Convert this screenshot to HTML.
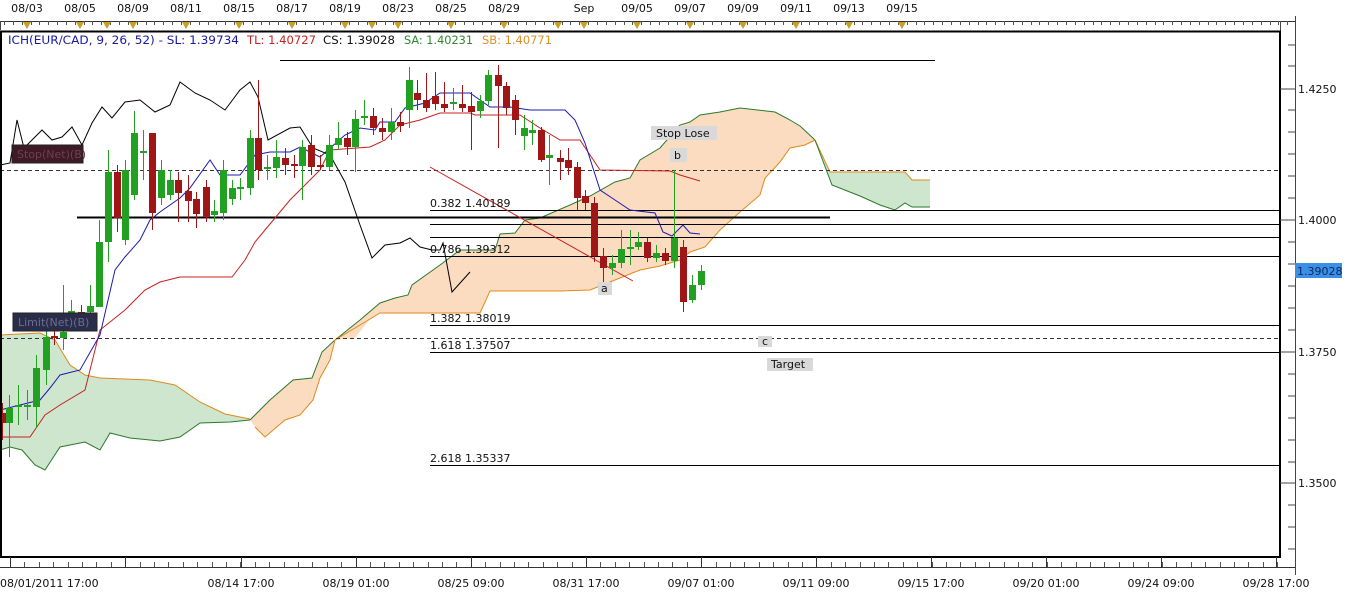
<!DOCTYPE html>
<html><head><meta charset="utf-8"><style>
html,body{margin:0;padding:0;background:#fff;}
svg{display:block;}
text{font-family:"DejaVu Sans","Liberation Sans",sans-serif;}
</style></head><body>
<svg width="1352" height="595" viewBox="0 0 1352 595" xmlns="http://www.w3.org/2000/svg">
<rect width="1352" height="595" fill="#fff"/>
<g font-size="11" fill="#111" text-anchor="middle">
<text x="27" y="12">08/03</text><text x="80" y="12">08/05</text><text x="133" y="12">08/09</text><text x="186" y="12">08/11</text><text x="239" y="12">08/15</text><text x="292" y="12">08/17</text><text x="345" y="12">08/19</text><text x="398" y="12">08/23</text><text x="451" y="12">08/25</text><text x="504" y="12">08/29</text><text x="584" y="12">Sep</text><text x="637" y="12">09/05</text><text x="690" y="12">09/07</text><text x="743" y="12">09/09</text><text x="796" y="12">09/11</text><text x="849" y="12">09/13</text><text x="902" y="12">09/15</text>
</g>
<line x1="0" y1="21.5" x2="1295" y2="21.5" stroke="#333" stroke-width="1"/>
<g id="tt" stroke="#555" stroke-width="1"></g>
<path d="M0.5 21 V30 M1280.5 21V31 M1295.5 16V575" stroke="#444" fill="none"/>
<g fill="#c8a028">
<path d="M23 22h8l-4 7z M76 22h8l-4 7z M103 22h8l-4 7z M129 22h8l-4 7z M182 22h8l-4 7z M235 22h8l-4 7z M288 22h8l-4 7z M341 22h8l-4 7z M368 22h8l-4 7z M394 22h8l-4 7z M447 22h8l-4 7z M500 22h8l-4 7z M554 22h8l-4 7z M580 22h8l-4 7z M633 22h8l-4 7z M686 22h8l-4 7z M739 22h8l-4 7z M792 22h8l-4 7z M845 22h8l-4 7z M898 22h8l-4 7z"/>
</g>
<path d="M0 335 L40 333 L55 340 L70 365 L85 375 L100 378 L150 380 L175 385 L200 402 L225 414 L250 419 L250 420 L230 422 L200 423 L180 437 L160 441 L130 438 L110 433 L100 450 L85 442 L60 447 L45 470 L35 465 L22 450 L10 447 L0 450 Z" fill="#cde6cd"/>
<path d="M0 335 L40 333 L55 340 L70 365 L85 375 L100 378 L150 380 L175 385 L200 402 L225 414 L250 419" stroke="#e08a1a" fill="none"/>
<path d="M0 450 L10 447 L22 450 L35 465 L45 470 L60 447 L85 442 L100 450 L110 433 L130 438 L160 441 L180 437 L200 423 L230 422 L250 420" stroke="#2a7a2a" fill="none"/>
<path d="M250 420 L270 400 L293 380 L312 378 L322 352 L335 340 L360 320 L380 303 L395 298 L408 295 L412 285 L440 265 L460 250 L495 250 L500 234 L515 233 L525 220 L540 218 L570 205 L590 196 L615 182 L630 178 L640 160 L660 148 L680 125 L690 122 L700 115 L720 112 L740 108 L775 112 L790 120 L800 126 L815 140 L805 145 L790 148 L780 162 L765 178 L760 195 L740 212 L720 230 L705 247 L690 252 L680 260 L660 266 L640 270 L620 278 L590 290 L560 291 L490 291 L480 313 L380 313 L370 319 L355 338 L335 340 L330 360 L320 378 L313 400 L300 415 L285 420 L265 437 L255 427 Z" fill="#fcdcc0"/>
<path d="M250 420 L270 400 L293 380 L312 378 L322 352 L335 340 L360 320 L380 303 L395 298 L408 295 L412 285 L440 265 L460 250 L495 250 L500 234 L515 233 L525 220 L540 218 L570 205 L590 196 L615 182 L630 178 L640 160 L660 148 L680 125 L690 122 L700 115 L720 112 L740 108 L775 112 L790 120 L800 126 L815 140" stroke="#2a7a2a" fill="none"/>
<path d="M255 427 L265 437 L285 420 L300 415 L313 400 L320 378 L330 360 L335 340 L370 319 L380 313 L480 313 L490 291 L560 291 L590 290 L620 278 L640 270 L660 266 L680 260 L690 252 L705 247 L720 230 L740 212 L760 195 L765 178 L780 162 L790 148 L805 145 L815 140" stroke="#e08a1a" fill="none"/>
<path d="M815 140 L830 172 L905 172 L912 180 L930 180 L930 207 L912 207 L905 203 L895 210 L880 205 L860 196 L840 188 L832 185 Z" fill="#cde6cd"/>
<path d="M815 140 L830 172 L905 172 L912 180 L930 180" stroke="#e08a1a" fill="none"/>
<path d="M815 140 L832 185 L860 196 L880 205 L895 210 L905 203 L912 207 L930 207" stroke="#2a7a2a" fill="none"/>
<line x1="280" y1="60.5" x2="935" y2="60.5" stroke="#000"/>
<line x1="77" y1="217.5" x2="830" y2="217.5" stroke="#000" stroke-width="2"/>
<g stroke="#000" stroke-width="1">
<line x1="430" y1="210.5" x2="1280" y2="210.5"/><line x1="430" y1="224.5" x2="1280" y2="224.5"/><line x1="430" y1="237.5" x2="1280" y2="237.5"/><line x1="430" y1="256.5" x2="1280" y2="256.5"/><line x1="430" y1="325.5" x2="1280" y2="325.5"/><line x1="430" y1="352.5" x2="1280" y2="352.5"/><line x1="430" y1="465.5" x2="1280" y2="465.5"/>
</g>
<line x1="0" y1="170.5" x2="1280" y2="170.5" stroke="#333" stroke-dasharray="4 3"/>
<line x1="0" y1="338.5" x2="1280" y2="338.5" stroke="#333" stroke-dasharray="4 3"/>
<line x1="430" y1="167" x2="633" y2="281" stroke="#c82020"/>
<path d="M0 437 L30 437 L45 415 L60 405 L85 390 L100 330 L125 310 L145 290 L160 282 L180 277 L232 277 L245 260 L255 242 L265 230 L290 200 L310 180 L320 170 L330 150 L370 147 L385 140 L400 125 L420 120 L440 113 L470 113 L475 115 L520 115 L540 128 L560 140 L580 140 L600 170 L670 171 L680 175 L700 181" stroke="#c82020" fill="none"/>
<path d="M0 410 L20 405 L40 400 L50 388 L60 375 L80 370 L100 335 L115 270 L125 257 L140 240 L150 220 L160 212 L180 198 L190 188 L210 160 L220 175 L240 175 L255 155 L270 152 L290 152 L300 147 L320 157 L345 135 L360 128 L375 130 L380 122 L395 122 L405 108 L425 103 L440 93 L470 93 L490 107 L510 107 L530 110 L565 110 L575 120 L585 143 L600 190 L615 200 L630 210 L655 213 L663 232 L672 236 L683 225 L690 233 L700 234" stroke="#1a1ab0" fill="none"/>
<path d="M0 165 L10 163 L17 120 L24 148 L32 140 L42 130 L52 140 L62 137 L72 127 L82 145 L92 123 L102 107 L112 118 L125 102 L140 100 L155 112 L170 105 L180 82 L195 93 L210 100 L225 110 L240 90 L250 82 L258 97 L268 140 L290 128 L300 127 L313 148 L330 155 L345 182 L360 225 L372 258 L385 245 L400 243 L410 238 L420 247 L432 250 L440 250 L443 243 L452 292 L470 272" stroke="#000" fill="none"/>
<g id="candles"></g>
<rect x="12" y="145" width="71" height="18" fill="#3d1a25" stroke="#222"/>
<text x="17" y="158" font-size="11" fill="#70404f">Stop(Net)(B)</text>
<rect x="13" y="313" width="84" height="18" fill="#2a2d4a" stroke="#222"/>
<text x="18" y="326" font-size="11" fill="#6a6e92">Limit(Net)(B)</text>
<g font-size="11" fill="#111">
<text x="430" y="207">0.382 1.40189</text><text x="430" y="253">0.786 1.39312</text><text x="430" y="322">1.382 1.38019</text><text x="430" y="349">1.618 1.37507</text><text x="430" y="462">2.618 1.35337</text>
</g>
<g font-size="11" fill="#111">
<rect x="651" y="126" width="66" height="14" fill="#d9d9d9"/><text x="656" y="137">Stop Lose</text>
<rect x="670" y="148" width="17" height="14" fill="#d9d9d9"/><text x="674" y="159">b</text>
<rect x="598" y="282" width="14" height="13" fill="#d9d9d9"/><text x="601" y="292">a</text>
<rect x="758" y="336" width="14" height="11" fill="#d9d9d9"/><text x="762" y="345">c</text>
<rect x="767" y="358" width="46" height="13" fill="#d9d9d9"/><text x="771" y="368">Target</text>
</g>
<rect x="1" y="31.5" width="1279" height="525.5" fill="none" stroke="#000" stroke-width="2"/>
<g stroke="#444">
<path d="M1288 45h7M1288 66h7M1288 110h7M1288 132h7M1288 154h7M1288 176h7M1288 198h7M1288 242h7M1288 264h7M1288 286h7M1288 308h7M1288 330h7M1288 374h7M1288 396h7M1288 418h7M1288 440h7M1288 462h7M1288 505h7M1288 527h7M1288 549h7"/>
<path d="M1280 89h15M1280 220h15M1280 352h15M1280 483h15"/>
</g>
<g font-size="11" fill="#111">
<text x="1298" y="93">1.4250</text><text x="1298" y="224">1.4000</text><text x="1298" y="356">1.3750</text><text x="1298" y="487">1.3500</text>
</g>
<rect x="1295" y="263" width="47" height="15" fill="#3c8fe6"/>
<text x="1297" y="275" font-size="11" fill="#0a2a60">1.39028</text>
<line x1="0" y1="567.5" x2="1295" y2="567.5" stroke="#333"/>
<g id="bt" stroke="#555"></g>
<g stroke="#333"><path d="M10.5 557V567M125.5 557V567M241.5 557V567M356.5 557V567M471.5 557V567M586.5 557V567M701.5 557V567M816.5 557V567M931.5 557V567M1046.5 557V567M1161.5 557V567M1276.5 557V567"/></g>
<g font-size="11" fill="#111" text-anchor="middle">
<text x="0" y="587" text-anchor="start">08/01/2011 17:00</text><text x="241" y="587">08/14 17:00</text><text x="356" y="587">08/19 01:00</text><text x="471" y="587">08/25 09:00</text><text x="586" y="587">08/31 17:00</text><text x="701" y="587">09/07 01:00</text><text x="816" y="587">09/11 09:00</text><text x="931" y="587">09/15 17:00</text><text x="1046" y="587">09/20 01:00</text><text x="1161" y="587">09/24 09:00</text><text x="1276" y="587">09/28 17:00</text>
</g>
<g font-size="11.5">
<text x="8" y="44" fill="#1a1aa0" textLength="231" lengthAdjust="spacingAndGlyphs">ICH(EUR/CAD, 9, 26, 52) -  SL: 1.39734</text>
<text x="247" y="44" fill="#c82020" textLength="69" lengthAdjust="spacingAndGlyphs">TL: 1.40727</text>
<text x="323" y="44" fill="#111" textLength="72" lengthAdjust="spacingAndGlyphs">CS: 1.39028</text>
<text x="404" y="44" fill="#2a8a2a" textLength="69" lengthAdjust="spacingAndGlyphs">SA: 1.40231</text>
<text x="482" y="44" fill="#e0902a" textLength="70" lengthAdjust="spacingAndGlyphs">SB: 1.40771</text>
</g>
</svg>
<script>
(function(){
var NS="http://www.w3.org/2000/svg";
function el(p,t,a){var e=document.createElementNS(NS,t);for(var k in a)e.setAttribute(k,a[k]);p.appendChild(e);return e;}
var tt=document.getElementById('tt');var d="";
for(var x=4;x<1290;x+=8.85){d+="M"+(Math.round(x)+0.5)+" 21V25";}
el(tt,'path',{d:d,fill:'none'});
var bt=document.getElementById('bt');d="";
for(var x=10;x<1280;x+=14.4){d+="M"+(Math.round(x)+0.5)+" 562V567";}
el(bt,'path',{d:d,fill:'none'});
var C=[
[2,413,423,403,440,'r'],[9,408,423,395,457,'g'],[18,405,407,385,425,'g'],[27,405,407,390,420,'g'],[36,368,407,355,428,'g'],[46,337,370,320,385,'g'],[54,336,338,325,345,'r'],[63,332,338,285,350,'g'],[71,311,313,300,330,'g'],[81,312,317,305,330,'r'],[90,306,312,285,320,'g'],[99,242,307,220,307,'g'],[108,172,242,150,262,'g'],[117,172,218,165,232,'r'],[125,170,240,160,245,'g'],[134,133,195,111,200,'g'],[143,151,153,130,180,'g'],[152,133,213,140,230,'r'],[161,170,198,160,205,'g'],[170,180,195,170,200,'g'],[178,180,193,172,222,'r'],[188,191,201,175,222,'r'],[196,199,214,192,228,'r'],[206,187,217,180,222,'r'],[214,211,215,200,222,'g'],[223,170,213,160,220,'g'],[232,188,199,180,205,'g'],[240,187,189,178,200,'g'],[250,138,188,130,195,'g'],[258,138,170,80,180,'r'],[267,167,169,155,180,'g'],[276,157,168,140,178,'g'],[285,158,165,148,175,'r'],[294,164,166,155,178,'r'],[302,147,166,140,200,'g'],[311,145,167,135,175,'r'],[320,165,167,155,170,'r'],[329,145,167,135,170,'g'],[338,138,145,122,150,'g'],[347,138,147,132,155,'r'],[355,119,147,110,172,'g'],[364,116,118,100,125,'g'],[373,116,128,108,135,'r'],[382,128,132,118,140,'r'],[391,122,132,108,140,'g'],[400,122,126,112,132,'r'],[409,80,110,67,128,'g'],[417,93,100,80,110,'r'],[426,100,108,73,112,'r'],[435,96,104,72,110,'r'],[444,104,108,82,112,'r'],[453,102,104,88,110,'g'],[462,104,108,85,112,'r'],[471,106,112,92,150,'r'],[480,101,111,95,118,'g'],[488,75,101,70,105,'g'],[498,75,86,65,148,'r'],[506,86,108,82,115,'r'],[515,100,120,95,135,'r'],[524,128,136,115,150,'g'],[532,130,133,120,145,'g'],[541,130,160,127,162,'r'],[549,155,158,135,185,'g'],[560,158,162,150,180,'r'],[568,160,168,148,175,'r'],[577,167,198,162,210,'r'],[585,196,203,190,210,'r'],[594,203,256,197,262,'r'],[603,256,268,248,288,'r'],[612,263,268,255,275,'g'],[621,249,263,230,268,'g'],[630,247,249,230,265,'g'],[638,242,247,232,250,'g'],[647,242,258,238,262,'r'],[656,253,258,245,262,'g'],[665,253,261,248,265,'r'],[674,238,261,170,268,'g'],[683,247,302,240,312,'r'],[692,285,300,275,303,'g'],[701,271,285,265,290,'g']
];
var g=document.getElementById('candles');
C.forEach(function(c){
 var col=c[5]=='g'?'#22a022':'#a01515';
 el(g,'line',{x1:c[0]+.5,y1:c[3],x2:c[0]+.5,y2:c[4],stroke:col,'stroke-width':1});
 var h=Math.max(2,c[2]-c[1]);
 el(g,'rect',{x:c[0]-3,y:c[1],width:7,height:h,fill:col});
});
})();
</script>
</body></html>
